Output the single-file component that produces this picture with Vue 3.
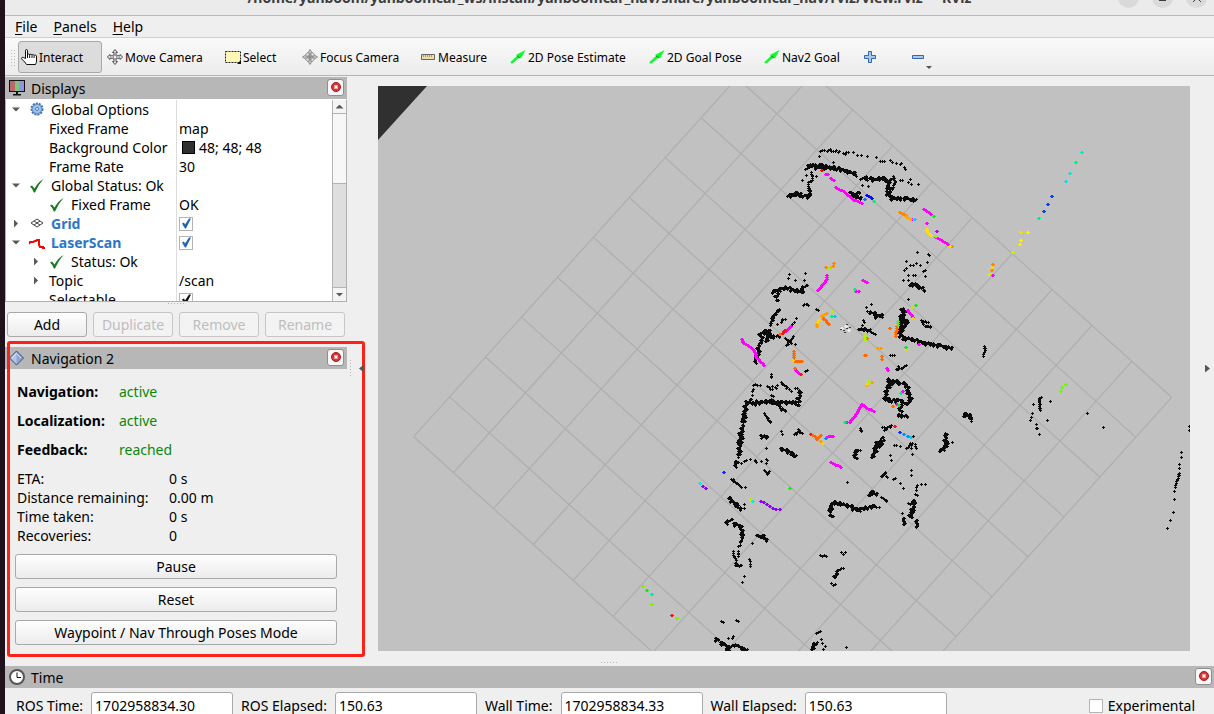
<script setup>
import { ref, reactive } from 'vue'

const tools = [
  { name: 'Interact', icon: 'hand', width: 84 },
  { name: 'Move Camera', icon: 'move', width: 116 },
  { name: 'Select', icon: 'select', width: 75 },
  { name: 'Focus Camera', icon: 'focus', width: 116 },
  { name: 'Measure', icon: 'ruler', width: 88 },
  { name: '2D Pose Estimate', icon: 'arrow', width: 137 },
  { name: '2D Goal Pose', icon: 'arrow', width: 113 },
  { name: 'Nav2 Goal', icon: 'arrow', width: 98 },
]
const activeTool = ref('Interact')

const rows = reactive([
  { name: 'Global Options', level: 0, arrow: 'open', icon: 'gear' },
  { name: 'Fixed Frame', level: 1, value: 'map' },
  { name: 'Background Color', level: 1, value: '48; 48; 48', swatch: true },
  { name: 'Frame Rate', level: 1, value: '30' },
  { name: 'Global Status: Ok', level: 0, arrow: 'open', icon: 'ok' },
  { name: 'Fixed Frame', level: 1, icon: 'ok', value: 'OK' },
  { name: 'Grid', level: 0, arrow: 'closed', icon: 'grid', bold: true, checked: true },
  { name: 'LaserScan', level: 0, arrow: 'open', icon: 'scan', bold: true, checked: true },
  { name: 'Status: Ok', level: 1, arrow: 'closed', icon: 'ok' },
  { name: 'Topic', level: 1, arrow: 'closed', value: '/scan' },
  { name: 'Selectable', level: 1, checked: true, dark: true },
])

const states = [
  { label: 'Navigation:', value: 'active' },
  { label: 'Localization:', value: 'active' },
  { label: 'Feedback:', value: 'reached' },
]
const feedback = [
  { label: 'ETA:', value: '0 s' },
  { label: 'Distance remaining:', value: '0.00 m' },
  { label: 'Time taken:', value: '0 s' },
  { label: 'Recoveries:', value: '0' },
]

const clocks = reactive([
  { id: 'ros-time', label: 'ROS Time:', value: '1702958834.30' },
  { id: 'ros-elapsed', label: 'ROS Elapsed:', value: '150.63' },
  { id: 'wall-time', label: 'Wall Time:', value: '1702958834.33' },
  { id: 'wall-elapsed', label: 'Wall Elapsed:', value: '150.63' },
])
const experimental = ref(false)

// 10 x 10 grid, drawn from its top corner
const top = [395, -48]
const u = [39.87, 35.93]
const v = [-35.93, 39.87]
const gridPath = Array.from({ length: 11 }, (_, i) => {
  const a = [top[0] + u[0] * i, top[1] + u[1] * i]
  const b = [top[0] + v[0] * i, top[1] + v[1] * i]
  return `M${a[0]} ${a[1]}l${v[0] * 10} ${v[1] * 10}M${b[0]} ${b[1]}l${u[0] * 10} ${u[1] * 10}`
}).join('')

// Map tiles: x/y is the tile origin on the canvas, s the units per pixel.
// Lines are split by "|", every layer is [colour, lines, dots, thickness].
const K = '#0c0c0c'
const M = '#ff00ff'
const tiles = [
  { x: 312, y: 44, s: 3, layers: [
    [K, '292,200 303,197 320,190 335,197 355,200 360,185|357,106 385,105 410,110 436,115 460,120 495,132|360,110 420,114|528,145 550,148 575,145 598,152|590,185 605,205 640,205 675,210|595,155 598,190|485,190 500,200 512,205|488,196 505,188|250,485 270,478 290,472 310,480 335,485 345,468|262,490 260,510|660,462 680,465 700,480|640,535 635,560 628,590', '', 2],
    [K, '365,128 368,150 355,157 356,180|345,118 357,110|610,140 615,155 608,178|512,148 528,140|245,565 268,540|460,122 497,128', '390,63 396,61 402,60 411,63 415,60 421,58 425,64 430,64 435,64 440,62 445,66 449,64 461,70 466,72 470,68 476,66 490,66 502,75 515,75 532,79 560,83 572,95 578,95 584,93 600,90 607,96 618,100 630,103 634,100 643,112 647,118 388,80 430,98 336,150 350,135 378,138 518,167 535,170 630,152 637,150 655,158 665,162 660,148 684,163 682,368 714,374 718,376 650,393 712,396 648,415 643,422 660,405 670,405 680,400 690,407 705,420 705,440 700,425 655,435 670,435 676,437 640,450 655,452 655,507 345,430 299,433 316,450 295,446 343,450 348,524 340,527 355,527 378,539 384,542 320,565 278,568', 1],
    ['#ff0000', '', '393,120', 1],
    [M, '405,133 411,133|420,145 430,150|435,173 460,185 490,210 515,220|700,237 720,252|737,322 775,345|382,482 410,447 410,435|518,452 530,458|497,484 505,485', '708,279 665,268', 1],
    ['#0d0dff', '530,197 545,206', '', 1],
    ['#0078ff', '', '522,207', 1],
    ['#00f070', '', '549,213 494,479', 1],
    ['#ff8400', '628,248 645,256|429,400 427,408', '785,349 406,412', 1],
    ['#ffa800', '645,258 662,267', '420,413', 1],
    ['#00d0ff', '', '674,268', 1],
    ['#10ef10', '', '731,260', 1],
    ['#b000ff', '', '740,305', 1],
    ['#ffe000', '708,297 712,308 722,317', '777,349', 1],
    ['#9cf000', '', '737,319 415,414', 1],
  ] },
  { x: 312, y: 214, s: 3, layers: [
    [K, '215,100 235,92 240,110 265,108|212,100 215,125|235,98 232,122|207,130 205,160 195,185|330,275 325,312|170,308 200,310 230,305 255,308 290,308 325,308|168,310 162,350 155,400 150,430 145,465|151,400 148,460|215,408 230,412|275,445 295,455 315,468|140,485 135,495|545,38 560,48 576,45|510,88 530,88|643,30 640,60 628,100 640,115 670,118 700,128 740,135 785,145|653,62 633,92|595,235 600,250 590,270 585,295 600,302 630,300|605,243 620,245 650,255 655,280 662,298 650,312|635,308 630,330|625,345 650,350|825,340 845,358|827,348 842,346|768,402 766,425 772,432 755,450|575,415 560,435 550,470|578,425 567,440|497,450 495,472', '', 2],
    [K, '250,47 268,28|240,75 250,55|285,115 305,130|290,137 310,110|695,62 705,78 720,80|700,65 714,66|222,340 240,365|312,404 328,395|324,388 336,400|535,90 555,103|883,140 885,150 880,168|618,208 635,205 648,195|273,248 290,260|245,298 285,332|222,510 232,522 237,514|578,382 590,385|582,390 605,376|650,445 668,430|243,222 243,230|510,385 515,395|575,530 585,518', '260,2 343,14 352,12 378,29 385,32 320,56 278,60 285,58 262,72 275,68 307,73 312,68 316,134 345,215 352,212 190,255 197,252 202,255 210,257 232,258 238,262 246,258 255,262 262,255 190,268 186,275 186,287 181,298 240,268 248,268 258,266 243,285 250,288 290,265 298,268 304,275 315,265 322,265 328,270 185,297 198,300 270,325 275,332 273,395 277,402 228,445 155,490 162,483 170,480 180,478 195,485 200,488 195,480 213,485 230,490 230,478 232,482 130,538 543,13 530,22 533,34 520,62 522,68 518,75 600,165 606,167 612,165 577,177 625,200 787,427 505,450 512,452 612,437 620,436 630,440 600,465 605,480 675,432 660,430 665,445 670,410 667,462 680,445 677,438 664,512 664,525 540,88', 1],
    [M, '155,118 157,128 190,150 200,175 220,195|285,95 302,80|315,210 325,220|653,32 667,52|478,367 500,340 515,313 530,325 550,334|410,411 427,410|422,487 452,503|590,205 592,210', '685,132 618,314 637,274 470,367', 1],
    ['#ff1010', '277,100 284,90', '331,222 614,380 362,403', 1],
    ['#ff6a00', '310,155 310,180|312,184 335,184|397,52 415,72|620,80 615,110|368,405 380,418 392,405|573,170 573,178', '267,103 312,205 598,85 530,115 527,167 608,318 523,167', 1],
    ['#ff9c00', '395,50 398,46 408,40', '378,80 380,74 562,146 570,146 545,247 392,425 528,255', 1],
    ['#ffd400', '382,68 384,62', '308,180 645,148 530,252 398,430 667,56', 1],
    ['#b4f000', '522,105 523,122', '428,35 664,22 534,246 532,244', 1],
    ['#60f000', '622,65 622,76', '', 1],
    ['#10e820', '', '675,15 647,142 625,316', 1],
    ['#00ec80', '', '424,50 462,367 632,280', 1],
    ['#00c8ff', '', '432,48 661,413', 1],
    ['#0090ff', '', '641,402 651,408 406,415', 1],
    ['#1030ff', '', '629,396 100,518', 1],
    ['#ececec', '', '455,84 466,78 474,90', 1],
    ['#3a3a3a', '', '460,90 468,86 464,98 478,82 470,74 452,88', 0],
  ] },
  { x: 312, y: 354, s: 3, layers: [
    [K, '115,175 135,190 150,208|110,248 122,242|130,250 155,262 157,280 153,300|205,288 220,290 230,300|138,370 148,378|75,595 95,610 108,615|110,628 135,612|145,618 168,630|372,610 370,625|440,395 435,412|423,228 422,205 430,188 445,190 470,195 490,205 510,208 530,202 552,200|535,165 548,158 560,162|672,180 668,210 660,230|640,237 646,250|675,245 682,255', '', 2],
    [K, '125,118 140,130 152,140|575,172 588,182|445,390 460,385|130,335 130,345 138,360|145,335 144,348|576,108 585,96', '155,142 167,142 163,193 163,205 152,203 152,315 146,320 187,311 178,358 180,364 180,372 180,380 162,409 158,427 94,543 99,548 140,541 146,545 130,588 128,594 115,595 378,580 384,576 390,575 394,597 382,607 398,610 405,620 400,627 469,621 392,347 398,350 404,346 410,350 454,338 460,344 466,338 425,430 431,436 437,432 472,126 558,202 568,201 510,215 592,113 590,108 610,117 615,115 632,130 639,145 683,135 695,132 706,132 680,142 680,152 682,165 676,163 655,190 662,194 636,220 664,92 664,105', 1],
    ['#00f0e0', '', '29,130 188,185', 1],
    ['#9000ff', '', '37,139 47,144 212,183 221,188 230,194 238,199 247,205 256,208 267,207', 1],
    ['#b4f000', '', '179,179', 1],
    ['#10ef10', '', '299,144', 1],
  ] },
  { x: 562, y: 44, s: 3, layers: [
    [K, '305,803 297,806 300,840', '281,822 331,814 276,850 275,862 270,871 322,872 290,884 290,895 441,849 489,892 748,890', 1],
    ['#00f0c0', '', '425,66 389,129', 1],
    ['#00f080', '', '407,98 294,266', 1],
    ['#00e0ff', '', '375,155', 1],
    ['#0840ff', '', '334,198 321,222 309,243', 1],
    ['#fff000', '', '262,308 241,331 238,344', 1],
    ['#ffd800', '', '241,308 153,413', 1],
    ['#ff8400', '', '156,402 153,422', 1],
    ['#c0f800', '', '216,366 145,434', 1],
    [M, '', '156,437', 1],
    ['#70f800', '', '375,763 364,773 361,784', 1],
  ] },
  { x: 0, y: 0, s: 1, layers: [
    [K, '801,387 800,392 797,401', '803,366 803,371 801,378 801,382 796,405 796,413 795,426 792,434 789,442 659,342 661,348 811,344', 1],
    ['#80f000', '', '264,500 273,518 298,532', 1],
    ['#20e020', '', '268,504', 1],
    ['#00e8b0', '', '273,508', 1],
    ['#ff1010', '', '293,529', 1],
  ] },
]

const parse = (text) => text.split(' ').filter(Boolean).map((p) => p.split(',').map(Number))

// one map cell is a plus of pixels, one laser hit is a little wider
function stamp(x, y, wide) {
  return wide
    ? `M${x - 1} ${y}h4v1h-4zM${x} ${y - 1}h2v3h-2z`
    : `M${x - 1} ${y}h3v1h-3zM${x} ${y - 1}h1v3h-1z`
}

function layerPath(tile, [color, lines, dots, w]) {
  const wide = color !== K
  let d = ''
  let n = 0
  const put = (px, py) => {
    const x = Math.round(tile.x + px / tile.s - 0.5)
    const y = Math.round(tile.y + py / tile.s - 0.5)
    d += w ? stamp(x, y, wide) : `M${x} ${y}h2v1h-2z`
    if (w > 1) {
      n += 1
      d += stamp(x + (n * 7) % 3 - 1, y + (n * 5) % 4 - 1, false)
      d += stamp(x + (n * 3) % 4 - 2, y - (n * 2) % 3 + 1, true)
    }
  }
  parse(dots).forEach(([x, y]) => put(x, y))
  lines.split('|').forEach((line) => {
    const pts = parse(line)
    for (let i = 1; i < pts.length; i++) {
      const [ax, ay] = pts[i - 1]
      const [bx, by] = pts[i]
      const steps = Math.max(1, Math.round(Math.hypot(bx - ax, by - ay) / tile.s / 2))
      for (let k = 0; k <= steps; k++) {
        put(ax + ((bx - ax) * k) / steps, ay + ((by - ay) * k) / steps)
        // neighbouring cells keep the thin walls from looking drawn with a pen
        if (color === K && w === 1 && k % 2) d += stamp(Math.round(tile.x + (ax + ((bx - ax) * k) / steps) / tile.s), Math.round(tile.y + (ay + ((by - ay) * k) / steps) / tile.s), false)
      }
    }
  })
  return d
}

const cloud = tiles.flatMap((tile) => tile.layers.map((layer) => ({ color: layer[0], d: layerPath(tile, layer) })))
cloud.sort((a, b) => (b.color === K) - (a.color === K))
</script>

<template>
  <div class="desktop">
    <div class="window">
      <header class="titlebar">
        <h1>/home/yahboom/yahboomcar_ws/install/yahboomcar_nav/share/yahboomcar_nav/rviz/view.rviz* - RViz</h1>
        <div class="window-buttons">
          <button type="button" aria-label="Minimize"></button>
          <button type="button" aria-label="Maximize"><i class="max"></i></button>
          <button type="button" aria-label="Close"><i class="cross"></i></button>
        </div>
      </header>

      <nav class="menubar">
        <button type="button"><u>F</u>ile</button>
        <button type="button"><u>P</u>anels</button>
        <button type="button"><u>H</u>elp</button>
      </nav>

      <div class="toolbar">
        <span class="grip"></span>
        <button
          v-for="tool in tools"
          :key="tool.name"
          type="button"
          class="tool"
          :class="{ active: activeTool === tool.name }"
          :style="{ width: tool.width + 'px' }"
          @click="activeTool = tool.name"
        >
          <svg v-if="tool.icon === 'hand'" width="16" height="16" viewBox="0 0 16 16">
            <path d="M4.500 9.500V1.800q0-1.300 1-1.300t1 1.300V6q0-1 1-1t1.200 1q0-.8 1.100-.8T11 6.300q0-.7 1-.7t1.100 1q.2-.6 1-.6t1.400 1V12q0 1.500-1 3.500H5.500Q4.500 13 1.500 11 0 9.500.8 8.700t2 0z" fill="#fff" stroke="#111" />
            <path d="M6.500 6v3M8.700 6v3M11 6.500V9M13.100 7v2" stroke="#111" fill="none" />
          </svg>
          <svg v-else-if="tool.icon === 'move'" width="16" height="16" viewBox="0 0 16 16">
            <path d="M8 .5l2.500 3H9v2l1.500 1L13 7V5.500l2.700 2.500L13 10.500V9l-2.500.5L9 10.500v2h1.500L8 15.500l-2.500-3H7v-2L5.500 9.500 3 9v1.500L.3 8 3 5.500V7l2.500-.5 1.500-1v-2H5.500z" fill="#ddd" stroke="#555" />
            <circle cx="8" cy="8" r="2" fill="#eee" stroke="#777" />
          </svg>
          <svg v-else-if="tool.icon === 'select'" width="16" height="16" viewBox="0 0 16 16">
            <path d="M.5 2.500h15v11H.5z" fill="#fff6b8" stroke="#222" stroke-dasharray="2 1" />
            <path d="M16 11v4h-4z" fill="#111" />
          </svg>
          <svg v-else-if="tool.icon === 'focus'" width="16" height="16" viewBox="0 0 16 16">
            <circle cx="8" cy="8" r="5" fill="#e6e6e6" stroke="#888" />
            <circle cx="8" cy="8" r="2.500" fill="none" stroke="#888" />
            <path d="M8 .5L9 2v3H7V2zM8 15.500L9 14v-3H7v3zM.5 8L2 7h3v2H2zM15.500 8L14 7h-3v2h3z" fill="#eee" stroke="#888" />
            <path d="M8 6v4M6 8h4" stroke="#666" />
          </svg>
          <svg v-else-if="tool.icon === 'ruler'" width="16" height="16" viewBox="0 0 16 16">
            <path d="M1.500 5.500h13v5h-13z" fill="#eadfae" stroke="#666" />
            <path d="M3.500 6v2M5.500 6v2M7.500 6v2M9.500 6v2M11.500 6v2" stroke="#999" />
          </svg>
          <svg v-else width="16" height="16" viewBox="0 0 16 16">
            <path d="M1 14.500L.5 13 7 7 6 6l9.500-5L11 9.500 9.500 8.500 3 14z" fill="#0dfb2b" />
            <path d="M7 7l3 2" stroke="#089018" />
          </svg>
          <span>{{ tool.name }}</span>
        </button>
        <button type="button" class="tool plus" aria-label="Add tool">
          <svg width="12" height="12" viewBox="0 0 12 12">
            <path d="M4.500.5h3v4h4v3h-4v4h-3v-4h-4v-3h4z" fill="#a9c8ee" stroke="#3465a4" />
          </svg>
        </button>
        <button type="button" class="tool minus" aria-label="Remove tool">
          <svg width="12" height="12" viewBox="0 0 12 12"><path d="M.5 4.500h11v3H.5z" fill="#a9c8ee" stroke="#3465a4" /></svg>
          <svg class="drop" width="6" height="3" viewBox="0 0 6 3"><path d="M0 0h6L3 3z" fill="#555" /></svg>
        </button>
      </div>

      <main class="workspace">
        <aside class="left">
          <section class="dock">
            <h2 class="dock-title">
              <svg width="16" height="16" viewBox="0 0 16 16">
                <path d="M0 0h16v12H0z" fill="#111" />
                <path d="M1 1h5v10H1z" fill="#b86a6a" />
                <path d="M6 1h4v10H6z" fill="#7dc583" />
                <path d="M10 1h5v10h-5z" fill="#9494dd" />
                <path d="M7 12h2v2h3v1.500H4V14h3z" fill="#111" />
              </svg>
              <span>Displays</span>
              <button type="button" class="close" aria-label="Close Displays">
                <svg width="12" height="12" viewBox="0 0 12 12"><circle cx="6" cy="6" r="4.500" fill="#d4383d" stroke="#b0151b" /><path d="M4.500 4.500l3 3M7.500 4.500l-3 3" stroke="#fff" stroke-width="1.500" /></svg>
              </button>
            </h2>
            <div class="tree">
              <div class="tree-rows">
                <div v-for="(row, i) in rows" :key="i" class="row">
                  <div class="name" :class="['level-' + row.level, { bold: row.bold }]">
                    <span class="arrow" :class="row.arrow"></span>
                    <svg v-if="row.icon === 'gear'" width="16" height="16" viewBox="0 0 16 16">
                      <circle cx="8" cy="7" r="5.500" fill="#8fb4e0" stroke="#3f72b5" stroke-width="2" stroke-dasharray="2 1" />
                      <circle cx="8" cy="7" r="4.500" fill="#a3c2e8" stroke="#6b97d0" />
                      <circle cx="8" cy="7" r="1.500" fill="#fff" stroke="#3f72b5" />
                    </svg>
                    <svg v-else-if="row.icon === 'ok'" width="16" height="16" viewBox="0 0 16 16">
                      <path d="M1 8.500l2-1 2.500 3Q9 4 14.500 1 9 7 6 14.500H4.800Q4 11 1 8.500z" fill="#1b7a24" />
                    </svg>
                    <svg v-else-if="row.icon === 'grid'" width="16" height="16" viewBox="0 0 16 16">
                      <path d="M8 3l6 4-6 4-6-4zM5 5l6 4M11 5L5 9" fill="none" stroke="#444" />
                    </svg>
                    <svg v-else-if="row.icon === 'scan'" width="16" height="16" viewBox="0 0 16 16">
                      <path d="M0 9l1-2h3l2-1h1l1-1h2v5l1 2h3v1h2" fill="none" stroke="#f00" stroke-width="2" />
                    </svg>
                    <span>{{ row.name }}</span>
                  </div>
                  <div class="value">
                    <input
                      v-if="row.checked !== undefined"
                      v-model="row.checked"
                      type="checkbox"
                      :class="{ dark: row.dark }"
                      :aria-label="row.name"
                    />
                    <i v-if="row.swatch" class="swatch"></i>
                    <span v-if="row.value">{{ row.value }}</span>
                  </div>
                </div>
              </div>
              <div class="scrollbar">
                <button type="button" aria-label="Scroll up"><i class="up"></i></button>
                <div class="thumb"></div>
                <button type="button" class="down-button" aria-label="Scroll down"><i class="down"></i></button>
              </div>
            </div>
            <div class="dots-h"></div>
            <div class="actions">
              <button type="button" class="btn">Add</button>
              <button type="button" class="btn" disabled>Duplicate</button>
              <button type="button" class="btn" disabled>Remove</button>
              <button type="button" class="btn" disabled>Rename</button>
            </div>
          </section>

          <section class="dock nav2">
            <h2 class="dock-title">
              <svg width="16" height="16" viewBox="0 0 16 16">
                <path d="M7.500 1l7 7-7 7-7-7z" fill="#8ea6cf" stroke="#3c4f78" />
                <path d="M7.500 2v12l-6-6z" fill="#b4c5e2" />
                <path d="M3 8l4.500-4.500L12 8" stroke="#d7e1f0" fill="none" />
              </svg>
              <span>Navigation 2</span>
              <button type="button" class="close" aria-label="Close Navigation 2">
                <svg width="12" height="12" viewBox="0 0 12 12"><circle cx="6" cy="6" r="4.500" fill="#d4383d" stroke="#b0151b" /><path d="M4.500 4.500l3 3M7.500 4.500l-3 3" stroke="#fff" stroke-width="1.500" /></svg>
              </button>
            </h2>
            <table class="states">
              <tbody>
                <tr v-for="state in states" :key="state.label">
                  <th scope="row">{{ state.label }}</th>
                  <td>{{ state.value }}</td>
                </tr>
              </tbody>
            </table>
            <table class="feedback">
              <tbody>
                <tr v-for="item in feedback" :key="item.label">
                  <th scope="row">{{ item.label }}</th>
                  <td>{{ item.value }}</td>
                </tr>
              </tbody>
            </table>
            <div class="nav-buttons">
              <button type="button" class="btn">Pause</button>
              <button type="button" class="btn">Reset</button>
              <button type="button" class="btn">Waypoint / Nav Through Poses Mode</button>
            </div>
            <div class="highlight"></div>
          </section>
        </aside>

        <button type="button" class="collapse" aria-label="Hide left panel">
          <span class="dots-v"></span>
          <i class="to-left"></i>
        </button>

        <svg class="canvas" viewBox="0 0 812 565" preserveAspectRatio="xMinYMin slice">
          <path d="M0 0h812v565H0z" fill="#c1c1c1" />
          <path d="M0 0h49L0 54z" fill="#303030" />
          <path :d="gridPath" fill="none" stroke="#aeaeae" stroke-width="1.200" />
          <path v-for="(layer, i) in cloud" :key="i" :d="layer.d" :fill="layer.color" shape-rendering="crispEdges" />
        </svg>

        <button type="button" class="collapse right" aria-label="Hide right panel"><i class="to-right"></i></button>
      </main>

      <footer class="time">
        <div class="dots-h"></div>
        <h2 class="dock-title">
          <svg width="16" height="16" viewBox="0 0 16 16">
            <circle cx="8" cy="8" r="7" fill="#fff" stroke="#555" stroke-width="2" />
            <path d="M8 3.500V8.500h4" fill="none" stroke="#111" />
          </svg>
          <span>Time</span>
          <button type="button" class="close" aria-label="Close Time">
            <svg width="12" height="12" viewBox="0 0 12 12"><circle cx="6" cy="6" r="4.500" fill="#d4383d" stroke="#b0151b" /><path d="M4.500 4.500l3 3M7.500 4.500l-3 3" stroke="#fff" stroke-width="1.500" /></svg>
          </button>
        </h2>
        <div class="clocks">
          <template v-for="clock in clocks" :key="clock.id">
            <label :for="clock.id">{{ clock.label }}</label>
            <input :id="clock.id" v-model="clock.value" type="text" />
          </template>
          <label class="experimental"><input v-model="experimental" type="checkbox" />Experimental</label>
        </div>
      </footer>
    </div>
  </div>
</template>

<style>
body {
  margin: 0;
}
</style>

<style scoped>
* {
  box-sizing: border-box;
}

.desktop {
  height: 100vh;
  padding-left: 5px;
  background: #20121c;
  overflow: hidden;
  font-family: "Noto Sans", "Open Sans", sans-serif;
  font-size: 14px;
  line-height: 19px;
  color: #000;
}

button,
input {
  font: inherit;
  color: inherit;
}

button {
  padding: 0;
  border: 0;
  background: none;
}

h1,
h2 {
  margin: 0;
  font-size: inherit;
}

svg {
  flex: none;
}

.window {
  display: flex;
  flex-direction: column;
  height: 100%;
  background: #efefef;
}

.titlebar {
  position: relative;
  display: flex;
  flex: none;
  align-items: flex-end;
  justify-content: center;
  height: 16px;
  padding-bottom: 8px;
  border-bottom: 1px solid #b9b9b9;
  background: #ebebeb;
  color: #3d3d3d;
  overflow: hidden;
}

.titlebar h1 {
  white-space: nowrap;
}

.window-buttons {
  position: absolute;
  right: 7px;
  bottom: 7px;
  display: flex;
  gap: 13px;
}

.window-buttons button {
  display: flex;
  align-items: center;
  justify-content: center;
  width: 21px;
  height: 21px;
  border-radius: 50%;
  background: #dadada;
}

.max {
  width: 7px;
  height: 7px;
  border: 1px solid #3d3d3d;
}

.cross {
  width: 8px;
  height: 8px;
  background: linear-gradient(45deg, transparent 44%, #3d3d3d 44%, #3d3d3d 56%, transparent 56%), linear-gradient(-45deg, transparent 44%, #3d3d3d 44%, #3d3d3d 56%, transparent 56%);
}

.menubar {
  display: flex;
  flex: none;
  gap: 16px;
  height: 22px;
  padding-left: 10px;
  border-bottom: 1px solid #d0d0d0;
  line-height: 21px;
}

.menubar u {
  text-underline-offset: 2px;
}

.toolbar {
  display: flex;
  flex: none;
  align-items: center;
  gap: 2px;
  height: 38px;
  padding-top: 1px;
  padding-left: 5px;
  border-bottom: 1px solid #b4b4b4;
  background: linear-gradient(#f9f9f9, #ececec);
  font-size: 12px;
}

.grip {
  width: 6px;
  height: 17px;
  background: radial-gradient(#bbb 1px, transparent 1px) 0 0 / 3px 3px;
}

.tool {
  display: flex;
  flex: none;
  align-items: center;
  gap: 2px;
  height: 32px;
  padding-left: 3px;
  border-radius: 3px;
  white-space: nowrap;
}

.tool.active {
  padding-left: 2px;
  border: 1px solid #a8a8a8;
  background: #dcdcdc;
}

.plus {
  width: 46px;
}

.minus {
  position: relative;
  width: 24px;
}

.drop {
  position: absolute;
  right: 1px;
  bottom: 4px;
}

.workspace {
  display: flex;
  flex: 1;
  min-height: 0;
}

.left {
  flex: 0 0 342px;
  padding-top: 1px;
}

.left .dock-title {
  padding-right: 3px;
}

.dock-title {
  display: flex;
  align-items: center;
  gap: 6px;
  height: 22px;
  padding: 0 2px 0 4px;
  background: #b7b7b7;
  font-weight: 400;
}

.close {
  display: flex;
  align-items: center;
  justify-content: center;
  width: 17px;
  height: 17px;
  margin-bottom: 2px;
  margin-left: auto;
  border: 1px solid #8f8f8f;
  border-radius: 3px;
  background: #f7f7f7;
}

.tree {
  display: flex;
  height: 203px;
  border: 1px solid #b0b0b0;
  border-top-color: #fff;
  background: #fff;
  overflow: hidden;
}

.tree-rows {
  flex: 1;
}

.row {
  display: grid;
  grid-template-columns: 171px 1fr;
  height: 19px;
}

.name {
  display: flex;
  align-items: center;
  gap: 6px;
  padding-left: 2px;
  border-right: 1px solid #dcdcdc;
  white-space: nowrap;
}

.name.level-1 {
  padding-left: 22px;
}

.bold {
  color: #2a76c6;
  font-weight: 700;
}

.arrow {
  width: 15px;
  height: 8px;
}

.arrow.open {
  clip-path: polygon(4px 2px, 12px 2px, 8px 6px);
  background: #5a5a5a;
}

.arrow.closed {
  clip-path: polygon(6px 0, 10px 4px, 6px 8px);
  background: #5a5a5a;
}

.value {
  display: flex;
  align-items: center;
  gap: 4px;
  padding-left: 2px;
}

.swatch {
  width: 13px;
  height: 13px;
  margin-left: 3px;
  border: 1px solid #000;
  background: #303030;
}

input[type="checkbox"] {
  appearance: none;
  width: 14px;
  height: 14px;
  margin: 0;
  border: 1px solid #b4b4b4;
  background: #fff;
}

input[type="checkbox"]:checked::after {
  content: "";
  display: block;
  width: 12px;
  height: 12px;
  clip-path: polygon(2px 6px, 4px 5px, 5px 7px, 9px 1px, 11px 1px, 6px 11px, 5px 11px);
  background: #2165ae;
}

input.dark:checked::after {
  background: #111;
}

.scrollbar {
  display: flex;
  flex-direction: column;
  width: 14px;
  border-left: 1px solid #b4b4b4;
  background: #dedede;
}

.scrollbar button {
  display: flex;
  align-items: center;
  justify-content: center;
  height: 14px;
  border-bottom: 1px solid #b4b4b4;
  background: #f4f4f4;
}

.scrollbar .down-button {
  margin-top: auto;
  border-top: 1px solid #b4b4b4;
  border-bottom: 0;
}

.up,
.down {
  width: 8px;
  height: 4px;
  clip-path: polygon(0 100%, 50% 0, 100% 100%);
  background: #5a5a5a;
}

.down {
  clip-path: polygon(0 0, 100% 0, 50% 100%);
}

.thumb {
  height: 70px;
  border-bottom: 1px solid #b4b4b4;
  background: #f7f7f7;
}

.dots-h {
  width: 17px;
  height: 1px;
  margin: 1px auto 0;
  background: repeating-linear-gradient(90deg, #b5b5b5 0 1px, transparent 1px 3px);
}

.actions {
  display: flex;
  gap: 6px;
  padding: 8px 2px 10px;
}

.btn {
  flex: 1 1 0;
  height: 25px;
  border: 1px solid #a9a9a9;
  border-radius: 3px;
  background: linear-gradient(#fefefe, #ececec);
}

.btn:disabled {
  border-color: #c6c6c6;
  background: #f3f3f3;
  color: #bebebe;
}

.nav2 {
  position: relative;
}

.highlight {
  position: absolute;
  top: -6px;
  right: -18px;
  bottom: -12px;
  left: 2px;
  border: 3px solid #fb2318;
  border-radius: 3px;
  pointer-events: none;
}

table {
  border-collapse: collapse;
}

th,
td {
  padding: 0;
  text-align: left;
}

.states {
  margin: 8px 0 5px 12px;
}

.states tr {
  height: 29px;
}

.states th {
  width: 102px;
}

.states td {
  color: #0a870a;
}

.feedback {
  margin-left: 12px;
}

.feedback th {
  width: 152px;
  font-weight: 400;
}

.nav-buttons {
  display: flex;
  flex-direction: column;
  gap: 8px;
  padding: 9px 10px 0;
}

.nav-buttons .btn {
  flex: none;
}

.collapse {
  display: flex;
  flex: 0 0 31px;
  align-items: center;
  gap: 8px;
  padding-left: 3px;
}

.dots-v {
  width: 1px;
  height: 17px;
  background: repeating-linear-gradient(#b5b5b5 0 1px, transparent 1px 3px);
}

.to-left,
.to-right {
  width: 5px;
  height: 8px;
  clip-path: polygon(0 50%, 100% 0, 100% 100%);
  background: #555;
}

.to-right {
  clip-path: polygon(0 0, 100% 50%, 0 100%);
}

.collapse.right {
  flex-basis: 24px;
  padding-left: 15px;
}

.canvas {
  flex: 1 1 0;
  min-width: 0;
  height: auto;
  margin: 10px 0;
}

.time {
  flex: none;
  height: 53px;
  overflow: hidden;
}

.time .dots-h {
  margin-bottom: 3px;
}

.clocks {
  display: flex;
  align-items: center;
  gap: 8px;
  padding: 4px 19px 0 11px;
}

.clocks input[type="text"] {
  width: 142px;
  height: 27px;
  padding: 0 3px;
  border: 1px solid #a9a9a9;
  border-radius: 3px;
  background: #fff;
}

.experimental {
  display: flex;
  align-items: center;
  gap: 5px;
  margin-left: auto;
}
</style>
